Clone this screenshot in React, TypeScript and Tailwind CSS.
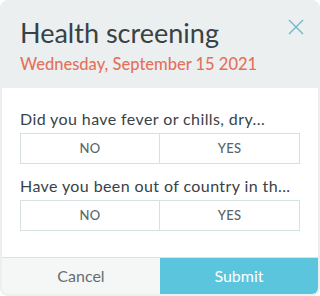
const questions = ["Did you have fever or chills, dry...", "Have you been out of country in th..."];

export default function App() {
  return (
    <div className="h-[296px] w-[320px] bg-white font-['Lato',sans-serif]">
      <div className="flex h-[296px] flex-col overflow-hidden rounded-[8px] border-2 border-t-0 border-[#eceff0] bg-white">
        <header className="relative h-[88px] bg-[#eceff0] px-[18px] pt-[16px]">
          <h1 className="text-[27px] leading-[34px] text-[#384246]">Health screening</h1>
          <p className="mt-[4px] text-[16.5px] font-medium leading-[20px] text-[#e2725b]">
            Wednesday, September 15 2021
          </p>
          <button className="absolute right-[14px] top-[19px] text-[#6ab6c7]">
            <svg width="16" height="16" viewBox="0 0 16 16" fill="none" stroke="currentColor" strokeWidth="1.3">
              <path d="M1 1L15 15M15 1L1 15" />
            </svg>
          </button>
        </header>
        <main className="flex-1 px-[18px] pt-[20px]">
          {questions.map((q) => (
            <div key={q} className="mb-[11px]">
              <p className="whitespace-nowrap text-[16px] leading-[22px] tracking-[0.4px] text-[#384246]">{q}</p>
              <div className="mt-[3px] grid h-[31px] grid-cols-2 border border-[#d6e1e4] text-[13px] font-medium tracking-[0.3px] text-[#59656a]">
                <button className="border-r border-[#d6e1e4]">NO</button>
                <button>YES</button>
              </div>
            </div>
          ))}
        </main>
        <footer className="grid h-[37px] grid-cols-2 border-t border-[#d9e2e4] text-[16px]">
          <button className="bg-[#f5f7f7] text-[#646e72]">Cancel</button>
          <button className="bg-[#5bc5dd] text-white">Submit</button>
        </footer>
      </div>
    </div>
  );
}
